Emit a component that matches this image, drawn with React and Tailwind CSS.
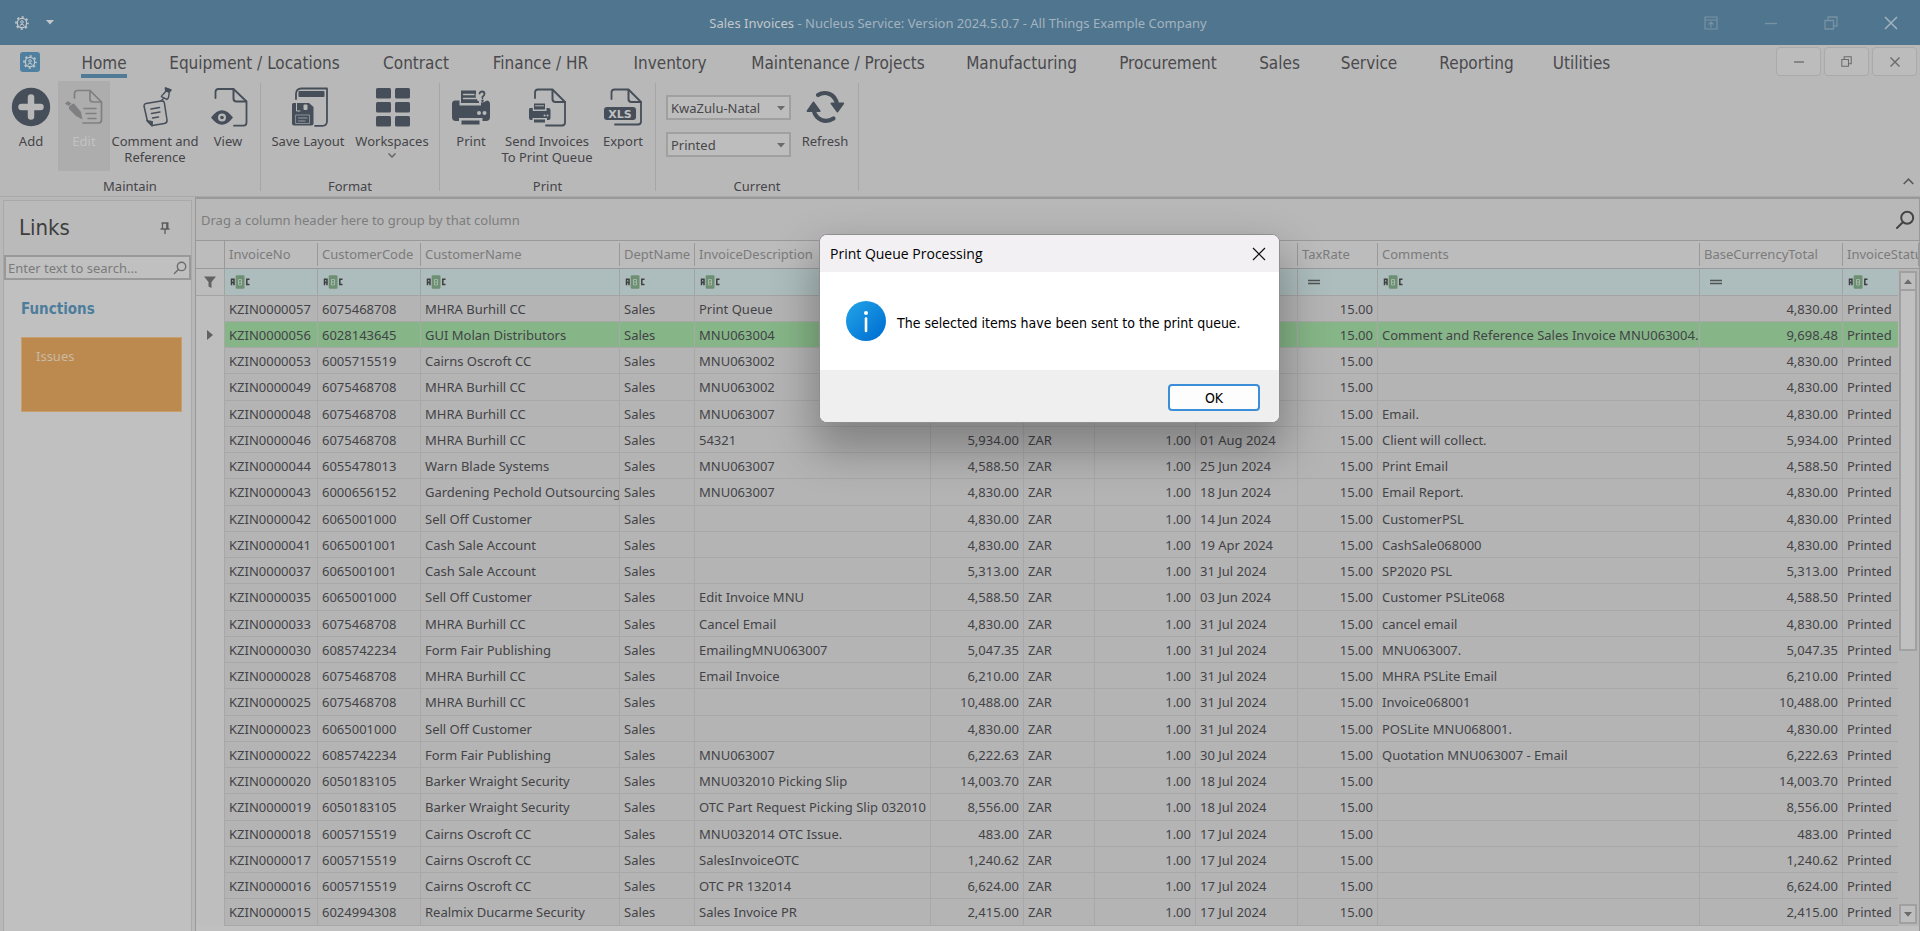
import React from "react";

const ROWS = [
  ["KZIN0000057", "6075468708", "MHRA Burhill CC", "Print Queue", "4,830.00", "31 Jul 2024", ""],
  ["KZIN0000056", "6028143645", "GUI Molan Distributors", "MNU063004", "9,698.48", "31 Jul 2024", "Comment and Reference Sales Invoice MNU063004."],
  ["KZIN0000053", "6005715519", "Cairns Oscroft CC", "MNU063002", "4,830.00", "31 Jul 2024", ""],
  ["KZIN0000049", "6075468708", "MHRA Burhill CC", "MNU063002", "4,830.00", "31 Jul 2024", ""],
  ["KZIN0000048", "6075468708", "MHRA Burhill CC", "MNU063007", "4,830.00", "31 Jul 2024", "Email."],
  ["KZIN0000046", "6075468708", "MHRA Burhill CC", "54321", "5,934.00", "01 Aug 2024", "Client will collect."],
  ["KZIN0000044", "6055478013", "Warn Blade Systems", "MNU063007", "4,588.50", "25 Jun 2024", "Print Email"],
  ["KZIN0000043", "6000656152", "Gardening Pechold Outsourcing", "MNU063007", "4,830.00", "18 Jun 2024", "Email Report."],
  ["KZIN0000042", "6065001000", "Sell Off Customer", "", "4,830.00", "14 Jun 2024", "CustomerPSL"],
  ["KZIN0000041", "6065001001", "Cash Sale Account", "", "4,830.00", "19 Apr 2024", "CashSale068000"],
  ["KZIN0000037", "6065001001", "Cash Sale Account", "", "5,313.00", "31 Jul 2024", "SP2020 PSL"],
  ["KZIN0000035", "6065001000", "Sell Off Customer", "Edit Invoice MNU", "4,588.50", "03 Jun 2024", "Customer PSLite068"],
  ["KZIN0000033", "6075468708", "MHRA Burhill CC", "Cancel Email", "4,830.00", "31 Jul 2024", "cancel email"],
  ["KZIN0000030", "6085742234", "Form Fair Publishing", "EmailingMNU063007", "5,047.35", "31 Jul 2024", "MNU063007."],
  ["KZIN0000028", "6075468708", "MHRA Burhill CC", "Email Invoice", "6,210.00", "31 Jul 2024", "MHRA PSLite Email"],
  ["KZIN0000025", "6075468708", "MHRA Burhill CC", "", "10,488.00", "31 Jul 2024", "Invoice068001"],
  ["KZIN0000023", "6065001000", "Sell Off Customer", "", "4,830.00", "31 Jul 2024", "POSLite MNU068001."],
  ["KZIN0000022", "6085742234", "Form Fair Publishing", "MNU063007", "6,222.63", "30 Jul 2024", "Quotation MNU063007 - Email"],
  ["KZIN0000020", "6050183105", "Barker Wraight Security", "MNU032010 Picking Slip", "14,003.70", "18 Jul 2024", ""],
  ["KZIN0000019", "6050183105", "Barker Wraight Security", "OTC Part Request Picking Slip 032010", "8,556.00", "18 Jul 2024", ""],
  ["KZIN0000018", "6005715519", "Cairns Oscroft CC", "MNU032014 OTC Issue.", "483.00", "17 Jul 2024", ""],
  ["KZIN0000017", "6005715519", "Cairns Oscroft CC", "SalesInvoiceOTC", "1,240.62", "17 Jul 2024", ""],
  ["KZIN0000016", "6005715519", "Cairns Oscroft CC", "OTC PR 132014", "6,624.00", "17 Jul 2024", ""],
  ["KZIN0000015", "6024994308", "Realmix Ducarme Security", "Sales Invoice PR", "2,415.00", "17 Jul 2024", ""],
];

const COLUMNS = [
  { name: "InvoiceNo", width: "w-[93px]", filter: "text" },
  { name: "CustomerCode", width: "w-[103px]", filter: "text" },
  { name: "CustomerName", width: "w-[199px]", filter: "text" },
  { name: "DeptName", width: "w-[75px]", filter: "text" },
  { name: "InvoiceDescription", width: "w-[236px]", filter: "text" },
  { name: "Total", width: "w-[93px]", filter: "number" },
  { name: "Currency", width: "w-[71px]", filter: "text" },
  { name: "ExchRate", width: "w-[101px]", filter: "number" },
  { name: "InvoiceDate", width: "w-[102px]", filter: "number" },
  { name: "TaxRate", width: "w-[80px]", filter: "number" },
  { name: "Comments", width: "", filter: "text" },
  { name: "BaseCurrencyTotal", width: "w-[143px]", filter: "number" },
  { name: "InvoiceStatus", width: "w-[76px]", filter: "text" },
];

const TABS = [
  ["Home", "w-[46px]"],
  ["Equipment / Locations", "w-[171px]"],
  ["Contract", "w-[68px]"],
  ["Finance / HR", "w-[97px]"],
  ["Inventory", "w-[78px]"],
  ["Maintenance / Projects", "w-[174px]"],
  ["Manufacturing", "w-[109px]"],
  ["Procurement", "w-[100px]"],
  ["Sales", "w-[39px]"],
  ["Service", "w-[56px]"],
  ["Reporting", "w-[75px]"],
  ["Utilities", "w-[51px]"],
];

function Gear({ className }) {
  return (
    <svg viewBox="0 0 14 14" className={className} fill="none" stroke="currentColor" aria-hidden="true">
      <circle cx="7" cy="7" r="4.7" strokeWidth="1.3" />
      <circle cx="7" cy="7" r="6" strokeWidth="1.6" strokeDasharray="2.2 2.51" strokeDashoffset="1.1" />
      <circle cx="7" cy="6" r="1.3" strokeWidth="1" />
      <path d="M4.9 9.6 Q7 6.8 9.1 9.6" strokeWidth="1.1" />
    </svg>
  );
}

function Icon({ children, className = "text-[#454e59]" }) {
  return (
    <svg viewBox="0 0 40 40" className={"h-10 w-10 shrink-0 " + className} fill="none" stroke="currentColor" strokeWidth="2" strokeLinecap="round" strokeLinejoin="round" aria-hidden="true">
      {children}
    </svg>
  );
}

const AddIcon = () => (
  <Icon>
    <circle cx="20" cy="20" r="19.2" fill="currentColor" stroke="none" />
    <path d="M20 10.5 V29.5 M10.5 20 H29.5" stroke="#b8b8b8" strokeWidth="6.5" />
  </Icon>
);

const EditIcon = () => (
  <Icon className="text-[#808083]">
    <path d="M10.5 11 V6.5 Q10.5 3.5 13.5 3.5 H26 L37.5 15 V33 Q37.5 36 34.5 36 H19" strokeWidth="1.7" />
    <path d="M26 3.5 V12 Q26 15 29 15 H37" strokeWidth="1.7" />
    <path d="M20 21.5 H32 M22 26.5 H32 M24 31.5 H32" strokeWidth="1.5" />
    <path d="M1 16.5 L4 14 L8 17 L10 16.5 L17 25 L18.5 32.5 L12 29 L5 22 L5 19.5 Z" fill="currentColor" stroke="none" />
    <path d="M4 19.5 L9 16" stroke="#adadad" strokeWidth="1" />
  </Icon>
);

const CommentIcon = () => (
  <Icon>
    <path d="M9 19 Q9 17 11 16.6 L26 14 Q29 13.5 29.4 16 L32 33 Q32.3 36 29.5 36.4 L17 38.4 L12.5 34.5 Z" strokeWidth="1.5" />
    <path d="M12 33.5 L17.5 34.5 L17 39 Z" fill="currentColor" strokeWidth="1" />
    <path d="M16 22 L24.5 20.5 M16.5 26.5 L25 25 M17.5 31 L23.5 30" strokeWidth="1.5" />
    <path d="M30.5 1 L36 3 L34.3 5 L33.8 8.5 Q33.8 11.5 31.5 12.5 M30.5 1 L31 4 L28.3 7.2 Q26.5 8.5 26.4 9.6 L32 12.3 M31 4 L34.3 5 M29 11 L26 14" strokeWidth="1.4" />
    <path d="M30.5 1 L36 3 L34.3 5 L31 4 Z" fill="currentColor" strokeWidth="1" />
  </Icon>
);

const ViewIcon = () => (
  <Icon>
    <path d="M7.5 11 V5 Q7.5 2 10.5 2 H25.5 L38.5 14.5 V35.5 Q38.5 38.7 35.5 38.7 H26" strokeWidth="1.8" />
    <path d="M25.5 2.5 V11.5 Q25.5 14.5 28.5 14.5 H38" />
    <path d="M3 30.5 Q14 16 25 30.5 Q14 45 3 30.5 Z" fill="currentColor" stroke="none" />
    <circle cx="14" cy="30.5" r="4" fill="#b8b8b8" stroke="none" />
    <circle cx="14" cy="30.5" r="1.8" fill="currentColor" stroke="none" />
  </Icon>
);

const SaveIcon = () => (
  <Icon>
    <path d="M8 12 V7 Q8 1.5 13.5 1.5 H39 V34 Q39 38.8 34.5 38.8 H27" strokeWidth="1.8" />
    <rect x="10.5" y="4" width="26" height="6" rx="1" fill="currentColor" stroke="none" />
    <path d="M4 17.5 Q4 16 5.5 16 H21 L25.5 20 V36.5 Q25.5 38.5 23.5 38.5 H6 Q4 38.5 4 36.5 Z" fill="currentColor" stroke="none" />
    <path d="M8.5 15 V24 H12" stroke="#b8b8b8" strokeWidth="1" />
    <rect x="15.5" y="17.5" width="4" height="5.5" rx="1" fill="#b8b8b8" stroke="none" />
    <rect x="8" y="28" width="13.5" height="8.5" stroke="#8b9097" strokeWidth="1" />
    <path d="M10.5 31 H19 M10.5 34 H17" stroke="#9a9ea4" strokeWidth="1.2" />
  </Icon>
);

const WorkspacesIcon = () => (
  <Icon>
    {[1, 15, 29].map((y) => (
      <g key={y} fill="currentColor" stroke="none">
        <rect x="4" y={y} width="15" height="10.5" rx="1.5" />
        <rect x="23" y={y} width="15" height="10.5" rx="1.5" />
      </g>
    ))}
  </Icon>
);

const PrintIcon = () => (
  <Icon>
    <path d="M10 3.5 H25 V8 L28 11 V16 H10 Z" fill="currentColor" stroke="none" />
    <path d="M12.5 7.5 H23 M12.5 11.5 H25" stroke="#b8b8b8" strokeWidth="1.4" />
    <path d="M4 13.5 H8.5 V18.5 H30 V13.5 H35.5 Q39 13.5 39 17 V30 Q39 34 35 34 H31.5 V31 H8 V34 H5 Q1 34 1 30 V17 Q1 13.5 4 13.5 Z" fill="currentColor" stroke="none" />
    <rect x="10.5" y="33.5" width="18" height="4" fill="currentColor" stroke="none" />
    <circle cx="28" cy="26" r="2" fill="#b8b8b8" stroke="none" />
    <circle cx="33.5" cy="26" r="2" fill="#b8b8b8" stroke="none" />
    <circle cx="31" cy="9" r="6.4" fill="#b8b8b8" stroke="none" />
    <path d="M28.5 6.5 Q29 4.5 31 4.5 Q33.5 4.5 33.5 7 Q33.5 8.5 31.5 9.7 V11" strokeWidth="1.8" />
    <circle cx="31.5" cy="13.8" r="1.2" fill="currentColor" stroke="none" />
  </Icon>
);

const SendIcon = () => (
  <Icon>
    <path d="M8 11 V5.5 Q8 2.5 11 2.5 H25.5 L38 15 V35.5 Q38 38.5 35 38.5 H19" strokeWidth="1.8" />
    <path d="M25.5 3 V12 Q25.5 15 28.5 15 H38" />
    <rect x="7" y="16.5" width="11" height="6" fill="currentColor" stroke="none" />
    <path d="M8.5 18.8 H16.5" stroke="#b8b8b8" strokeWidth="1" />
    <path d="M3 21 H5.8 V24 H19.5 V21 H21.5 Q23.5 21 23.5 23 V31 Q23.5 33 21.5 33 H20 V31 H5.5 V33 H4 Q2 33 2 31 V23 Q2 21 3 21 Z" fill="currentColor" stroke="none" />
    <rect x="7" y="32.5" width="11" height="3" fill="currentColor" stroke="none" />
    <path d="M17.5 28.5 H17.6 M20.5 28.5 H20.6" stroke="#b8b8b8" />
  </Icon>
);

const ExportIcon = () => (
  <Icon>
    <path d="M8.5 12 V5.5 Q8.5 2.5 11.5 2.5 H25.5 L38 15 V34.5 Q38 37.5 35 37.5 H12" strokeWidth="1.8" />
    <path d="M25.5 3 V12 Q25.5 15 28.5 15 H38" />
    <rect x="1" y="20" width="32" height="13" rx="3" fill="currentColor" stroke="none" />
    <text x="17" y="30.7" textAnchor="middle" fontSize="11" fontWeight="700" fontFamily="DejaVu Sans, sans-serif" fill="#c0c0c0" stroke="none">XLS</text>
  </Icon>
);

const RefreshIcon = () => (
  <Icon>
    <path d="M13 8 Q18.5 4.6 24.5 7 Q30.5 9.5 32 17" strokeWidth="4.2" />
    <path d="M8.7 23.5 Q10.5 30.5 16.5 33 Q22.5 35.2 28.5 31.5" strokeWidth="4.2" />
    <path d="M26.5 16.5 H38.2 L32.4 24.5 Z" fill="currentColor" />
    <path d="M2.6 24 H14.6 L8.5 15.5 Z" fill="currentColor" />
  </Icon>
);

function RibbonButton({ icon, children, className, label = "" }) {
  return (
    <button type="button" className={"flex h-[90px] shrink-0 flex-col items-center px-0 pt-[6px] text-center text-[13px] leading-4 " + className}>
      {icon}
      <span className={"mt-[6px] whitespace-nowrap " + label}>{children}</span>
    </button>
  );
}

function RibbonGroup({ name, className, children }) {
  return (
    <section className={"flex shrink-0 flex-col " + className}>
      <div className="flex h-[96px] px-[4px]">{children}</div>
      <h2 className="text-center text-[13px] leading-5">{name}</h2>
    </section>
  );
}

const Divider = () => <div className="mt-[2px] h-[108px] w-px shrink-0 bg-[#a6a6a6]" />;

function Combo({ label, value }) {
  return (
    <label className="relative block">
      <span className="sr-only">{label}</span>
      <select className="block h-[25px] w-[125px] appearance-none rounded-none border-2 border-[#a0a0a0] bg-[#bdbdbd] pl-[3px] text-[13px] leading-5 text-[#47474a]">
        <option>{value}</option>
      </select>
      <svg viewBox="0 0 8 5" className="pointer-events-none absolute top-[11px] right-[6px] h-[5px] w-2" aria-hidden="true">
        <path d="M0 0 H8 L4 4.5 Z" fill="#6b6b6b" />
      </svg>
    </label>
  );
}

function TextFilter() {
  return (
    <svg viewBox="0 0 20 14" className="h-[14px] w-5" fill="none" stroke="#3f3f3f" strokeWidth="1.5" aria-label="Contains">
      <path d="M1.5 10.3 V4.2 H4 V10.3 M1.5 7.4 H4" />
      <rect x="5.7" y="0.3" width="8.8" height="13.4" rx="1.2" fill="#6d8f72" stroke="none" />
      <path d="M8.5 4.5 H11.5 V10 H8.5 Z M8.5 7.2 H11.5" stroke="#a4b6a8" strokeWidth="1" />
      <path d="M19.5 4.2 H16.8 V9.6 H19.5" />
    </svg>
  );
}

function NumberFilter() {
  return (
    <svg viewBox="0 0 12 8" className="ml-[5px] h-2 w-3" aria-label="Equals">
      <path d="M0 2.5 H12 M0 5.5 H12" stroke="#505454" strokeWidth="1.6" />
    </svg>
  );
}

function Magnifier({ className, width }) {
  return (
    <svg viewBox="0 0 20 20" className={className} fill="none" stroke="currentColor" strokeWidth={width} strokeLinecap="round" aria-hidden="true">
      <circle cx="12.2" cy="7.8" r="6" />
      <path d="M7.8 12.2 L2 18" />
    </svg>
  );
}

function RestoreGlyph({ className }) {
  return (
    <svg viewBox="0 0 14 14" className={className} fill="none" stroke="currentColor" strokeWidth="1.3" aria-hidden="true">
      <path d="M1 4.5 H9.5 V13 H1 Z M4 4 V1 H13 V10 H10" />
    </svg>
  );
}

function TitleBar() {
  return (
    <header className="relative flex h-[45px] items-center bg-[#50768f] text-[#c3c7ca]">
      <button type="button" aria-label="Application menu" className="ml-[15px] flex h-[14px] w-[14px]"><Gear className="h-[14px] w-[14px]" /></button>
      <button type="button" aria-label="Customize toolbar" className="ml-[17px] flex">
        <svg viewBox="0 0 8 5" className="h-[5px] w-2" aria-hidden="true"><path d="M0 0 H8 L4 4.5 Z" fill="currentColor" /></svg>
      </button>
      <h1 className="absolute inset-x-0 pr-1 text-center text-[13px] leading-5">
        Sales Invoices <span className="text-[#a3b3bf]">- Nucleus Service: Version 2024.5.0.7 - All Things Example Company</span>
      </h1>
      <div className="relative ml-auto flex items-center gap-[46px] pr-[22px] text-[#7891a3]">
        <button type="button" aria-label="Ribbon display options">
          <svg viewBox="0 0 14 14" className="h-[14px] w-[14px]" fill="none" stroke="currentColor" strokeWidth="1.2" aria-hidden="true">
            <path d="M1 1 H13 V13 H1 Z M1 4 H13 M7 11.5 V6.5 M4.5 8.5 L7 6 L9.5 8.5" />
          </svg>
        </button>
        <button type="button" aria-label="Minimize">
          <svg viewBox="0 0 14 14" className="h-[14px] w-[14px]" aria-hidden="true"><path d="M1 7.5 H13" stroke="currentColor" strokeWidth="1.3" /></svg>
        </button>
        <button type="button" aria-label="Restore"><RestoreGlyph className="h-[14px] w-[14px]" /></button>
        <button type="button" aria-label="Close" className="text-[#a2b2be]">
          <svg viewBox="0 0 14 14" className="h-[14px] w-[14px]" aria-hidden="true"><path d="M1 1 L13 13 M13 1 L1 13" stroke="currentColor" strokeWidth="1.5" /></svg>
        </button>
      </div>
    </header>
  );
}

function TabBar() {
  const box = "flex h-[29px] w-[45px] items-center justify-center rounded-sm border border-[#aaaaaa] bg-[#bcbcbc] text-[#6a6a6a]";
  return (
    <div className="flex h-9 items-start">
      <button type="button" aria-label="File menu" className="mt-[7px] ml-5 flex h-5 w-5 items-center justify-center rounded-[3px] bg-[#50809f] text-[#c0c6ca]">
        <Gear className="h-[14px] w-[14px]" />
      </button>
      <nav className="ml-[41px] flex gap-[42px] font-['DejaVu_Sans_Condensed','Noto_Sans',sans-serif] text-[17px] leading-6 text-[#4a4a4d]">
        {TABS.map(([name, width], i) => (
          <a key={name} href="#" className={"flex h-[33px] justify-center whitespace-nowrap pt-[6px] " + width + (i === 0 ? " border-b-[4px] border-[#4f7b96]" : "")}>
            {name}
          </a>
        ))}
      </nav>
      <div className="mt-[2px] mr-[3px] ml-auto flex gap-[3px]">
        <button type="button" aria-label="Minimize document" className={box}>
          <svg viewBox="0 0 10 10" className="h-[10px] w-[10px]" aria-hidden="true"><path d="M0 5 H10" stroke="currentColor" strokeWidth="1.3" /></svg>
        </button>
        <button type="button" aria-label="Restore document" className={box}><RestoreGlyph className="h-[11px] w-[11px]" /></button>
        <button type="button" aria-label="Close document" className={box}>
          <svg viewBox="0 0 10 10" className="h-[10px] w-[10px]" aria-hidden="true"><path d="M0.5 0.5 L9.5 9.5 M9.5 0.5 L0.5 9.5" stroke="currentColor" strokeWidth="1.4" /></svg>
        </button>
      </div>
    </div>
  );
}

function Ribbon() {
  return (
    <div className="flex h-[116px] border-b border-[#a8a8a8]">
      <RibbonGroup name="Maintain" className="w-[260px]">
        <RibbonButton icon={<AddIcon />} className="w-[54px]">Add</RibbonButton>
        <RibbonButton icon={<EditIcon />} className="w-[52px] bg-[#adadad]" label="text-[#c2c2c2]">Edit</RibbonButton>
        <RibbonButton icon={<CommentIcon />} className="w-[90px]">Comment and<br />Reference</RibbonButton>
        <RibbonButton icon={<ViewIcon />} className="w-[56px]">View</RibbonButton>
      </RibbonGroup>
      <Divider />
      <RibbonGroup name="Format" className="w-[178px]">
        <RibbonButton icon={<SaveIcon />} className="w-[86px]">Save Layout</RibbonButton>
        <RibbonButton icon={<WorkspacesIcon />} className="w-[82px]">
          Workspaces
          <svg viewBox="0 0 8 5" className="mx-auto mt-[4px] h-[5px] w-2" fill="none" stroke="#666" strokeWidth="1.5" aria-hidden="true"><path d="M0.5 0.5 L4 4 L7.5 0.5" /></svg>
        </RibbonButton>
      </RibbonGroup>
      <Divider />
      <RibbonGroup name="Print" className="w-[215px]">
        <RibbonButton icon={<PrintIcon />} className="w-[54px]">Print</RibbonButton>
        <RibbonButton icon={<SendIcon />} className="w-[98px]">Send Invoices<br />To Print Queue</RibbonButton>
        <RibbonButton icon={<ExportIcon />} className="w-[54px]">Export</RibbonButton>
      </RibbonGroup>
      <Divider />
      <RibbonGroup name="Current" className="w-[202px]">
        <div className="flex flex-col gap-3 pt-[14px] pl-[6px]">
          <Combo label="Branch" value="KwaZulu-Natal" />
          <Combo label="Invoice status" value="Printed" />
        </div>
        <RibbonButton icon={<RefreshIcon />} className="ml-1 w-[60px]">Refresh</RibbonButton>
      </RibbonGroup>
      <Divider />
      <button type="button" aria-label="Collapse ribbon" className="mr-[6px] mb-[11px] ml-auto self-end">
        <svg viewBox="0 0 11 7" className="h-[7px] w-[11px]" fill="none" stroke="#5a5a5a" strokeWidth="1.6" aria-hidden="true"><path d="M0.7 6 L5.5 1.2 L10.3 6" /></svg>
      </button>
    </div>
  );
}

function LinksPanel() {
  return (
    <aside className="mt-[3px] ml-[3px] flex w-[189px] shrink-0 flex-col border-x border-t border-[#a9a9a9] bg-[#c0c0c0]">
      <div className="flex h-[54px] items-center justify-between bg-[#bababa] pr-[21px] pl-[15px]">
        <h2 className="font-['DejaVu_Sans_Condensed','Noto_Sans',sans-serif] text-[22px] leading-8 text-[#3e3e3e]">Links</h2>
        <button type="button" aria-label="Pin panel">
          <svg viewBox="0 0 10 12" className="h-3 w-[10px]" fill="none" stroke="#5c5c5c" strokeWidth="1.3" aria-hidden="true">
            <path d="M1.5 1 H8.5 M2.5 1 V6.5 M6.8 1 V6.5 M7.8 1 V6.5 M0.5 7 H9.5 M5 7 V12" />
          </svg>
        </button>
      </div>
      <label className="flex h-[25px] items-center border-2 border-[#999999] pr-[2px] pl-[2px] text-[#6c6c6c]">
        <span className="sr-only">Search links</span>
        <input type="text" placeholder="Enter text to search..." className="min-w-0 flex-1 bg-transparent text-[13px] leading-5 outline-none placeholder:text-[#7b7b7b]" />
        <Magnifier className="h-[14px] w-[14px]" width="2" />
      </label>
      <h3 className="mt-[17px] ml-[17px] font-['DejaVu_Sans_Condensed','Noto_Sans',sans-serif] text-[15px] leading-6 font-bold text-[#4d7d9c]">Functions</h3>
      <button type="button" className="mt-[16px] mr-[9px] ml-[17px] h-[75px] border border-[#c69f6c] bg-[#bc8a4e] pt-[8px] pl-[14px] text-left text-[13px] leading-5 text-[#c9b9a5]">
        <span className="block h-full">Issues</span>
      </button>
    </aside>
  );
}

function ScrollBar() {
  const btn = "flex h-5 shrink-0 items-center justify-center border-2 border-[#a0a0a0] bg-[#bebebe]";
  return (
    <div className="absolute top-[29px] right-0 bottom-0 flex w-[21px] flex-col bg-[#b6b6b6] py-[2px] pr-[2px] pl-[1px]">
      <button type="button" aria-label="Scroll up" className={btn}>
        <svg viewBox="0 0 8 5" className="h-[5px] w-2" aria-hidden="true"><path d="M0 5 H8 L4 0.3 Z" fill="#6b6b6b" /></svg>
      </button>
      <div className="h-[360px] border-2 border-t-0 border-[#a0a0a0] bg-[#c0c0c0]" />
      <button type="button" aria-label="Scroll down" className={btn + " mt-auto"}>
        <svg viewBox="0 0 8 5" className="h-[5px] w-2" aria-hidden="true"><path d="M0 0 H8 L4 4.7 Z" fill="#6b6b6b" /></svg>
      </button>
    </div>
  );
}

function InvoiceRow({ row, selected }) {
  const [no, code, customer, description, total, date, comments] = row;
  const base = "overflow-hidden whitespace-nowrap border-r border-b border-[#a8a8a8] py-0 ";
  const cell = base + "pr-0 pl-[4px]";
  const num = base + "px-[4px] text-right";
  return (
    <tr className={"h-[26px] nth-[4n]:h-[27px] " + (selected ? "bg-[#86b687]" : "bg-[#b4b4b4]")}>
      <td className="border-r border-[#a8a8a8] bg-[#bebebe] p-0">
        {selected && (
          <svg viewBox="0 0 6 10" className="ml-[11px] h-[10px] w-[6px]" aria-label="Current row"><path d="M0 0 L6 5 L0 10 Z" fill="#626262" /></svg>
        )}
      </td>
      <td className={cell}>{no}</td>
      <td className={cell}>{code}</td>
      <td className={cell}>{customer}</td>
      <td className={cell}>Sales</td>
      <td className={cell}>{description}</td>
      <td className={num}>{total}</td>
      <td className={cell}>ZAR</td>
      <td className={num}>1.00</td>
      <td className={cell}>{date}</td>
      <td className={num}>15.00</td>
      <td className={cell}>{comments}</td>
      <td className={num}>{total}</td>
      <td className={cell}>Printed</td>
    </tr>
  );
}

function InvoiceGrid() {
  return (
    <main className="ml-[3px] min-w-0 flex-1 border-t-2 border-r border-l border-[#999999] bg-[#c0c0c0]">
      <div className="flex h-[41px] items-center justify-between bg-[#b8b8b8] pr-[4px] pl-[5px] text-[13px] text-[#7d7d7d]">
        <p className="pt-[2px]">Drag a column header here to group by that column</p>
        <button type="button" aria-label="Find" className="text-[#444444]"><Magnifier className="h-[20px] w-[20px]" width="2" /></button>
      </div>
      <div className="relative overflow-hidden">
        <table className="w-full table-fixed border-separate border-spacing-0 text-[13px] leading-5">
          <colgroup>
            <col className="w-[29px]" />
            {COLUMNS.map((c) => <col key={c.name} className={c.width} />)}
          </colgroup>
          <thead>
            <tr className="h-[29px] bg-[#bcbcbc] text-left text-[#7b7b7b]">
              <th className="border-y border-r border-[#999999] p-0" aria-label="Row state" />
              {COLUMNS.map((c) => (
                <th key={c.name} className="border-y border-[#999999] p-0 font-normal">
                  <div className="flex h-[23px] items-center overflow-hidden border-r border-[#999999] pb-[2px] pl-[4px] whitespace-nowrap">{c.name}</div>
                </th>
              ))}
            </tr>
            <tr className="h-[27px] bg-[#adbdbd]">
              <td className="border-r border-b border-[#a3a3a3] bg-[#bcbcbc] p-0">
                <svg viewBox="0 0 12 12" className="mx-auto h-3 w-3" aria-label="Filter"><path d="M0 0.5 H12 L7.5 6 V12 L4.5 10.5 V6 Z" fill="#626262" /></svg>
              </td>
              {COLUMNS.map((c) => (
                <td key={c.name} className="border-r border-b border-[#a3a3a3] px-[5px] py-0">
                  {c.filter === "text" ? <TextFilter /> : <NumberFilter />}
                </td>
              ))}
            </tr>
          </thead>
          <tbody className="text-[#434347]">
            {ROWS.map((row, i) => <InvoiceRow key={row[0]} row={row} selected={i === 1} />)}
          </tbody>
        </table>
        <ScrollBar />
      </div>
    </main>
  );
}

function PrintQueueDialog() {
  return (
    <div role="dialog" aria-labelledby="dialog-title" className="absolute top-[234px] left-[819px] w-[461px] overflow-hidden rounded-lg border border-[#8f8f8f] bg-white text-black shadow-[0_22px_44px_6px_rgba(0,0,0,0.28)]">
      <div className="flex h-[37px] items-center justify-between bg-[#f3f0f4] pr-[13px] pl-[10px]">
        <h2 id="dialog-title" className="font-['Open_Sans','Noto_Sans',sans-serif] text-[14px]">Print Queue Processing</h2>
        <button type="button" aria-label="Close dialog">
          <svg viewBox="0 0 14 14" className="h-[14px] w-[14px]" aria-hidden="true"><path d="M1 1 L13 13 M13 1 L1 13" stroke="#111" strokeWidth="1.2" /></svg>
        </button>
      </div>
      <div className="flex h-[98px] items-center gap-[11px] pl-[26px]">
        <svg viewBox="0 0 40 40" className="h-10 w-10 shrink-0" aria-hidden="true">
          <defs>
            <linearGradient id="info" x1="0" y1="0" x2="1" y2="1">
              <stop offset="0.1" stopColor="#1f9fe6" />
              <stop offset="0.9" stopColor="#0070d2" />
            </linearGradient>
          </defs>
          <circle cx="20" cy="20" r="20" fill="url(#info)" />
          <circle cx="20" cy="12" r="2" fill="#fff" />
          <path d="M20 17.5 V30" stroke="#fff" strokeWidth="2.6" strokeLinecap="round" />
        </svg>
        <p className="pt-[4px] font-['DejaVu_Sans_Condensed','Noto_Sans',sans-serif] text-[14px] whitespace-nowrap">The selected items have been sent to the print queue.</p>
      </div>
      <div className="flex h-[52px] items-start justify-end bg-[#efefef] pt-[14px] pr-[19px]">
        <button type="button" className="h-[27px] w-[92px] rounded-[4px] border-2 border-[#3b8fd8] bg-[#fdfdfd] font-['DejaVu_Sans_Condensed','Noto_Sans',sans-serif] text-[14px] leading-5">OK</button>
      </div>
    </div>
  );
}

export default function App() {
  return (
    <div className="relative flex min-h-screen flex-col overflow-hidden bg-[#b8b8b8] font-['Noto_Sans',sans-serif] text-[#454549]">
      <TitleBar />
      <TabBar />
      <Ribbon />
      <div className="flex flex-1">
        <LinksPanel />
        <InvoiceGrid />
      </div>
      <PrintQueueDialog />
    </div>
  );
}
